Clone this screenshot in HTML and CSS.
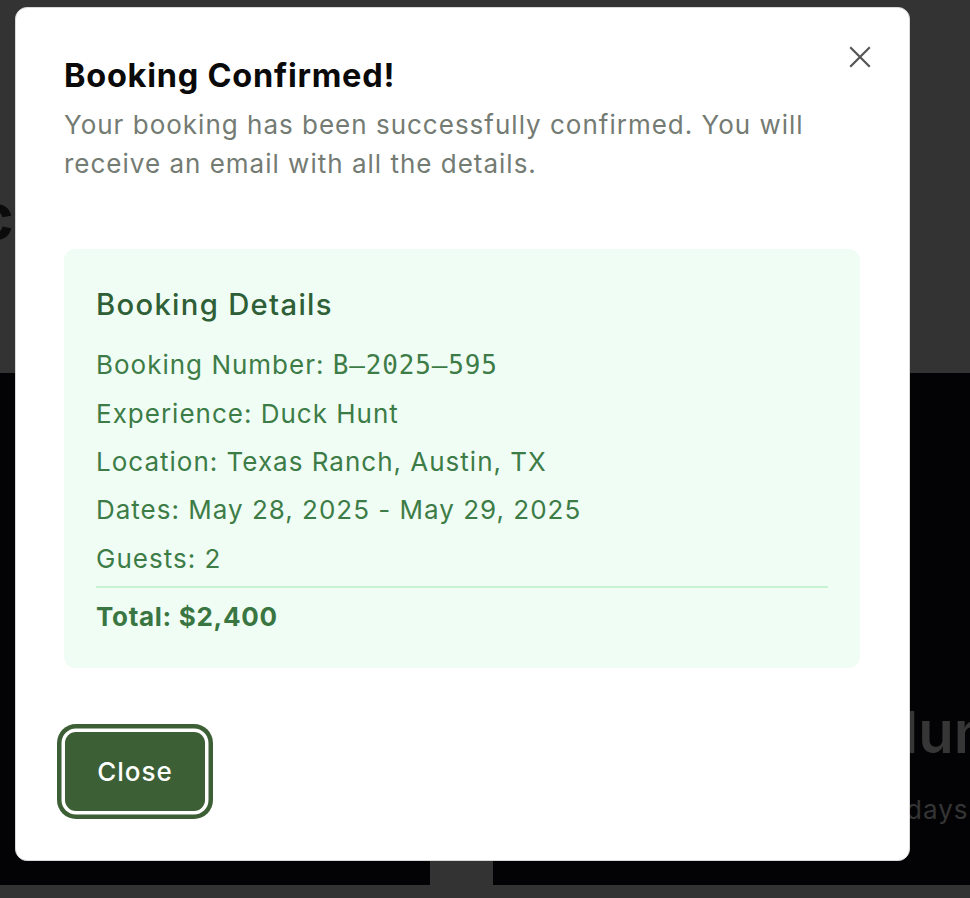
FILE: index.html
```html
<!DOCTYPE html>
<html lang="en">
<head>
<meta charset="utf-8">
<title>Booking Confirmed</title>
<link rel="stylesheet" href="styles.css">
</head>
<body>
<div class="page">
  <section class="hero">
    <h1 class="hero-title">c</h1>
  </section>
  <section class="listing">
    <div class="card-info">
      <h2 class="card-title">lunt</h2>
      <p class="card-meta">days</p>
    </div>
  </section>
  <div class="footer-strip">
    <div class="footer-block"></div>
  </div>
</div>

<div class="overlay">
  <div class="modal" role="dialog" aria-labelledby="modal-title">
    <button class="modal-close" aria-label="Close">
      <svg width="22" height="22" viewBox="0 0 22 22" fill="none" stroke="currentColor" stroke-width="2.2" stroke-linecap="square">
        <path d="M2 2 L20 20 M20 2 L2 20"/>
      </svg>
    </button>
    <header class="modal-header">
      <h2 class="modal-title" id="modal-title">Booking Confirmed!</h2>
      <p class="modal-desc">Your booking has been successfully confirmed. You will receive an email with all the details.</p>
    </header>
    <div class="details">
      <h3 class="details-title">Booking Details</h3>
      <ul class="details-list">
        <li>Booking Number: <span class="mono">B–2025–595</span></li>
        <li>Experience: Duck Hunt</li>
        <li>Location: Texas Ranch, Austin, TX</li>
        <li>Dates: May 28, 2025 - May 29, 2025</li>
        <li>Guests: 2</li>
      </ul>
      <div class="details-total">Total: $2,400</div>
    </div>
    <div class="modal-footer">
      <button class="btn-close">Close</button>
    </div>
  </div>
</div>
</body>
</html>
```

FILE: styles.css
```css
* { box-sizing: border-box; }
html, body { margin: 0; padding: 0; }
body {
  font-family: Inter, "Noto Sans", "Liberation Sans", sans-serif;
  background: #030305;
  overflow: hidden;
}
.page { width: 970px; height: 898px; display: flex; flex-direction: column; }
.hero {
  height: 373px;
  background: #333333;
  padding-top: 184px;
}
.hero-title {
  margin: 0 0 0 -24px;
  font-size: 64px;
  font-weight: 700;
  color: #0b0b0b;
  line-height: 1;
}
.listing {
  height: 512px;
  background: #030305;
  display: flex;
  justify-content: flex-end;
}
.card-info {
  width: 64px;
  padding-top: 330px;
  overflow: hidden;
}
.card-title {
  margin: 0 0 0 -3px;
  font-size: 58px;
  font-weight: 600;
  color: #363636;
  line-height: 1;
  white-space: nowrap;
}
.card-meta {
  margin: 36px 0 0 0;
  font-size: 26px;
  color: #353535;
  line-height: 1;
  letter-spacing: 1px;
}
.footer-strip {
  flex: 1;
  background: #333333;
  position: relative;
}
.footer-block {
  position: absolute;
  left: 430px;
  top: -26px;
  width: 63px;
  height: 40px;
  background: #333333;
}

.overlay {
  position: fixed;
  inset: 0;
}
.modal {
  position: absolute;
  left: 15px;
  top: 7px;
  width: 895px;
  height: 854px;
  background: #ffffff;
  border: 1px solid #d9d9d9;
  border-radius: 12px;
  padding: 48px 49px 49px 48px;
  display: flex;
  flex-direction: column;
}
.modal-close {
  position: absolute;
  top: 38px;
  right: 38px;
  width: 22px;
  height: 22px;
  padding: 0;
  border: 0;
  background: none;
  color: #555555;
  display: flex;
}
.modal-header { display: flex; flex-direction: column; }
.modal-title {
  margin: 0;
  font-size: 32.5px;
  line-height: 39px;
  font-weight: 700;
  color: #0a0a0a;
  letter-spacing: 0.75px;
}
.modal-desc {
  margin: 10px 0 0 0;
  font-size: 26px;
  line-height: 39px;
  color: #737b73;
  letter-spacing: 1px;
  max-width: 790px;
}
.details {
  margin-top: 66px;
  background: #f0fdf4;
  border-radius: 11px;
  padding: 33px 32px 32px 32px;
}
.details-title {
  margin: 0;
  font-size: 29.25px;
  line-height: 45.5px;
  font-weight: 500;
  color: #2e5f36;
  letter-spacing: 1.3px;
}
.details-list {
  list-style: none;
  margin: 17px 0 0 0;
  padding: 0;
  display: flex;
  flex-direction: column;
  gap: 9.3px;
}
.details-list li,
.details-total {
  font-size: 26px;
  line-height: 39px;
  color: #3d7c47;
  letter-spacing: 1px;
}
.mono {
  font-family: "DejaVu Sans Mono", "Liberation Mono", monospace;
  font-size: 26px;
  letter-spacing: 0.85px;
}
.details-total {
  margin-top: 8px;
  border-top: 2px solid #c9f2d3;
  padding-top: 9px;
  font-weight: 700;
  color: #3a7642;
  letter-spacing: 0.7px;
}
.modal-footer {
  margin-top: 64px;
  display: flex;
}
.btn-close {
  width: 140px;
  height: 79px;
  background: #3c5f35;
  color: #ffffff;
  border: 0;
  border-radius: 11px;
  font-family: Inter, "Noto Sans", sans-serif;
  font-size: 26px;
  font-weight: 500;
  letter-spacing: 1px;
  box-shadow: 0 0 0 3.5px #ffffff, 0 0 0 8px #3c5f35;
  margin-left: 1px;
}
```
